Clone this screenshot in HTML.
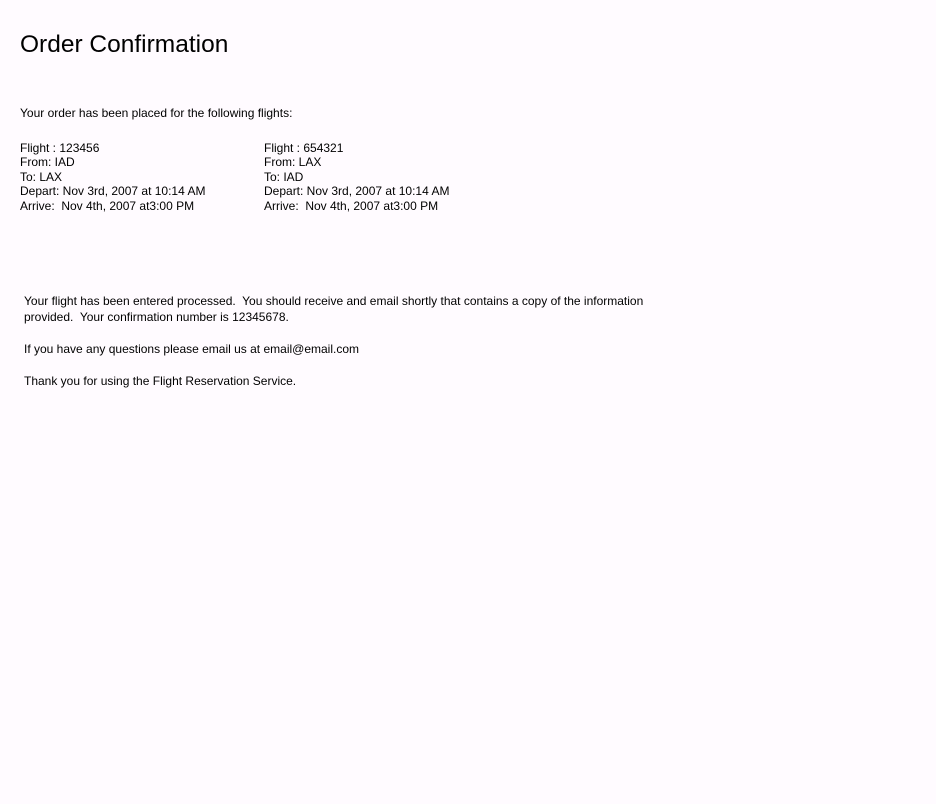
<!DOCTYPE html>
<html><head><style>
html,body{margin:0;padding:0;background:#fffbff;width:936px;height:804px;overflow:hidden}
body{font-family:"Liberation Sans",sans-serif;color:#000;font-size:12px;position:relative}
.a{position:absolute;white-space:pre;line-height:14.4px}
h1{position:absolute;left:20px;top:31px;margin:0;font-weight:normal;font-size:24.5px;line-height:28px}
</style></head><body>
<h1>Order Confirmation</h1>
<div class="a" style="left:20px;top:106px">Your order has been placed for the following flights:</div>
<div class="a" style="left:20px;top:141px">Flight : 123456
From: IAD
To: LAX
Depart: Nov 3rd, 2007 at 10:14 AM
Arrive:  Nov 4th, 2007 at3:00 PM</div>
<div class="a" style="left:264px;top:141px">Flight : 654321
From: LAX
To: IAD
Depart: Nov 3rd, 2007 at 10:14 AM
Arrive:  Nov 4th, 2007 at3:00 PM</div>
<div class="a" style="left:24px;top:293px;line-height:16px">Your flight has been entered processed.  You should receive and email shortly that contains a copy of the information
provided.  Your confirmation number is 12345678.

If you have any questions please email us at email@email.com

Thank you for using the Flight Reservation Service.</div>
</body></html>
